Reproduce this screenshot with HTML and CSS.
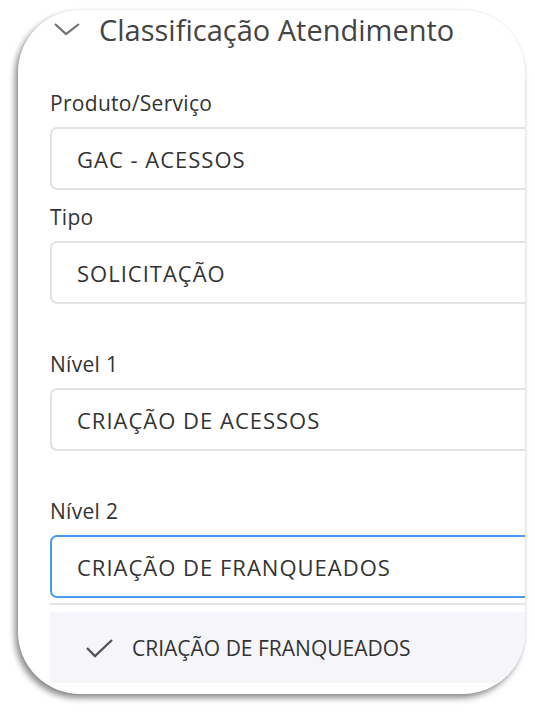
FILE: index.html
```html
<html>
<head>
<title>Classificação Atendimento</title>
<link rel="stylesheet" href="styles.css">
</head>
<body>
<div class="card">
  <div class="section-head">
    <svg class="chevron" width="28" height="14" viewBox="0 0 28 14">
      <polyline points="2,2 13,12 26,2" fill="none" stroke="#707070" stroke-width="2.2" />
    </svg>
    <span class="section-title">Classificação Atendimento</span>
  </div>

  <div class="group first">
    <label class="label">Produto/Serviço</label>
    <div class="field">GAC - ACESSOS</div>
  </div>

  <div class="group">
    <label class="label">Tipo</label>
    <div class="field">SOLICITAÇÃO</div>
  </div>

  <div class="group spaced">
    <label class="label">Nível 1</label>
    <div class="field">CRIAÇÃO DE ACESSOS</div>
  </div>

  <div class="group spaced">
    <label class="label">Nível 2</label>
    <div class="field focused">CRIAÇÃO DE FRANQUEADOS</div>
    <div class="dropdown">
      <div class="option selected">
        <svg class="check" width="30" height="22" viewBox="0 0 30 22">
          <polyline points="2,11 10,19 27,3" fill="none" stroke="#555" stroke-width="2.4" />
        </svg>
        <span>CRIAÇÃO DE FRANQUEADOS</span>
      </div>
    </div>
  </div>
</div>
</body>
</html>
```

FILE: styles.css
```css
body {
  margin: 0;
  background-color: white;
  font-family: "Open Sans", "Noto Sans", sans-serif;
  color: #333;
}
.card {
  margin: 10px 0 0 18px;
  width: 507px;
  height: 684px;
  border-radius: 62px;
  background-color: white;
  overflow: hidden;
  box-sizing: border-box;
  padding-left: 32px;
  box-shadow: -3px 4px 6px rgba(0, 0, 0, 0.45), 0 0 3px rgba(0, 0, 0, 0.08);
}
.section-head {
  display: flex;
  align-items: center;
  height: 38px;
}
.chevron {
  margin-left: 3px;
  margin-right: 18px;
}
.section-title {
  font-size: 29px;
  color: #444;
}
.group {
  display: flex;
  flex-direction: column;
  margin-top: 15px;
}
.group.first {
  margin-top: 43px;
}
.group.spaced {
  margin-top: 48px;
}
.label {
  font-size: 21px;
  line-height: 24px;
  letter-spacing: 0.3px;
  color: #333;
  margin-bottom: 12px;
}
.field {
  width: 520px;
  height: 63px;
  box-sizing: border-box;
  border: 2px solid #e2e2e2;
  border-radius: 7px;
  padding-left: 25px;
  display: flex;
  align-items: center;
  font-size: 22px;
  letter-spacing: 1px;
  color: #333;
}
.field.focused {
  border-color: #4a9af0;
}
.dropdown {
  width: 520px;
  margin-top: 5px;
  border-top: 2px solid #e4e4e4;
  padding-top: 7px;
  background-color: white;
}
.option {
  height: 71px;
  display: flex;
  align-items: center;
  padding-left: 35px;
  font-size: 21px;
}
.option.selected {
  background-color: #f6f5f9;
}
.check {
  margin-right: 17px;
}
```
